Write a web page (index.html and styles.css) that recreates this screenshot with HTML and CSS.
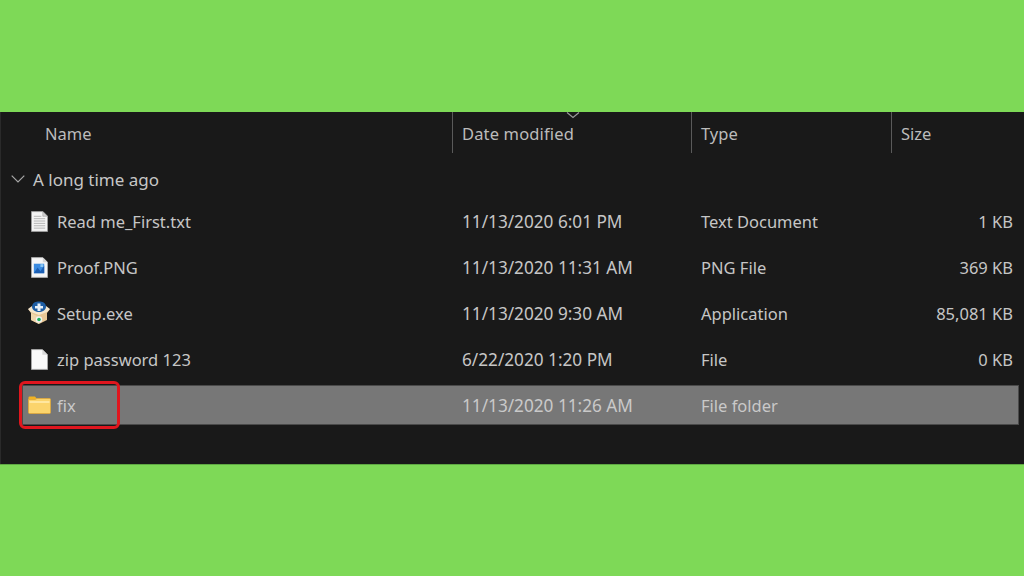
FILE: index.html
```html
<!DOCTYPE html>
<html lang="en">
<head>
<meta charset="utf-8">
<title>File list</title>
<link rel="stylesheet" href="styles.css">
</head>
<body>
<div class="band band-top"></div>
<main class="window">
  <div class="head">
    <div class="col col-name">Name</div>
    <div class="col col-date">Date modified
      <svg class="sort" width="14" height="7" viewBox="0 0 14 7"><path d="M1 0.5 L7 5.5 L13 0.5" fill="none" stroke="#9a9a9a" stroke-width="1.2"/></svg>
    </div>
    <div class="col col-type">Type</div>
    <div class="col col-size">Size</div>
  </div>
  <div class="group">
    <svg class="group-chev" width="14" height="8" viewBox="0 0 14 8"><path d="M0.7 0.7 L7 7 L13.3 0.7" fill="none" stroke="#a8a8a8" stroke-width="1.2"/></svg>
    <span>A long time ago</span>
  </div>
  <div class="rows">
    <div class="row">
      <div class="cell-name">
        <span class="icon">
          <svg width="17" height="21" viewBox="0 0 18 22">
            <path d="M0.5 0.5 H12.5 L17.5 5.5 V21.5 H0.5 Z" fill="#f4f4f4" stroke="#9d9d9d"/>
            <path d="M12.5 0.5 V5.5 H17.5 Z" fill="#cfcfcf" stroke="#9d9d9d" stroke-width="0.6"/>
            <path d="M3 5.5 H11 M3 8 H15 M3 10.5 H15 M3 13 H15 M3 15.5 H15 M3 18 H15" stroke="#b4b4b4" stroke-width="1"/>
          </svg>
        </span>
        <span>Read me_First.txt</span>
      </div>
      <div class="cell-date">11/13/2020 6:01 PM</div>
      <div>Text Document</div>
      <div class="cell-size">1 KB</div>
    </div>
    <div class="row">
      <div class="cell-name">
        <span class="icon">
          <svg width="17" height="21" viewBox="0 0 18 22">
            <path d="M0.5 0.5 H12.5 L17.5 5.5 V21.5 H0.5 Z" fill="#f6f6f6" stroke="#a8a8a8"/>
            <path d="M12.5 0.5 V5.5 H17.5 Z" fill="#d4d4d4"/>
            <rect x="3" y="7" width="11" height="10" fill="#3b8be0"/>
            <path d="M3 17 L7 11 L10 15 L14 9 V17 Z" fill="#1c5fb4"/>
            <rect x="10" y="7.5" width="3" height="3" fill="#8cc8f4"/>
          </svg>
        </span>
        <span>Proof.PNG</span>
      </div>
      <div class="cell-date">11/13/2020 11:31 AM</div>
      <div>PNG File</div>
      <div class="cell-size">369 KB</div>
    </div>
    <div class="row">
      <div class="cell-name">
        <span class="icon icon-wide">
          <svg width="24" height="24" viewBox="0 0 24 24">
            <path d="M1 8 L12 13 L23 8 L20 12 V19 L12 23 L4 19 V12 Z" fill="#e9c795"/>
            <path d="M4 12 L12 16 V23 L4 19 Z" fill="#f0d6ac"/>
            <path d="M1 8 L5 5 L12 10 L19 5 L23 8 L20 11 L12 14 L4 11 Z" fill="#f5e6cc"/>
            <path d="M5 6 C5 1.500 9 0.500 12 0.500 C15 0.500 19 1.500 19 6 C19 9 15 11 12 11 C9 11 5 9 5 6 Z" fill="#1f5ea3"/>
            <path d="M10.500 2.500 H13.500 V5 H16 V7.500 H13.500 V10 H10.500 V7.500 H8 V5 H10.500 Z" fill="#e8f0f8"/>
            <circle cx="12" cy="18.500" r="3.200" fill="#f2f2f2"/>
            <circle cx="12" cy="18.500" r="1.800" fill="#1fae5a"/>
          </svg>
        </span>
        <span>Setup.exe</span>
      </div>
      <div class="cell-date">11/13/2020 9:30 AM</div>
      <div>Application</div>
      <div class="cell-size">85,081 KB</div>
    </div>
    <div class="row">
      <div class="cell-name">
        <span class="icon">
          <svg width="17" height="21" viewBox="0 0 18 22">
            <path d="M0.5 0.5 H12 L17.5 6 V21.5 H0.5 Z" fill="#fafafa" stroke="#a8a8a8"/>
            <path d="M12 0.5 V6 H17.500 Z" fill="#d8d8d8"/>
          </svg>
        </span>
        <span>zip password 123</span>
      </div>
      <div class="cell-date">6/22/2020 1:20 PM</div>
      <div>File</div>
      <div class="cell-size">0 KB</div>
    </div>
    <div class="row row-selected">
      <div class="cell-name">
        <span class="icon icon-wide">
          <svg width="23" height="18" viewBox="0 0 23 18">
            <path d="M0.500 1.500 Q0.500 0.500 1.500 0.500 H7 L9 3 H8 V5 H0.500 Z" fill="#f2b322"/>
            <path d="M0.500 3.500 H7 L9 2.500 H21.500 Q22.500 2.500 22.500 3.500 V16.500 Q22.500 17.500 21.500 17.500 H1.500 Q0.500 17.500 0.500 16.500 Z" fill="#fbd46c" stroke="#e0a83a" stroke-width="0.800"/>
            <path d="M1.500 5 H21.500 V7 H1.500 Z" fill="#ffe7a0"/>
          </svg>
        </span>
        <span>fix</span>
      </div>
      <div class="cell-date">11/13/2020 11:26 AM</div>
      <div>File folder</div>
      <div class="cell-size"></div>
      <div class="callout"></div>
    </div>
  </div>
</main>
<div class="band band-bottom"></div>
</body>
</html>
```

FILE: styles.css
```css
* { box-sizing: border-box; }

html, body {
  margin: 0;
  height: 100%;
}

body {
  display: flex;
  flex-direction: column;
  width: 1024px;
  height: 576px;
  overflow: hidden;
  background: #7ed957;
  font-family: "Noto Sans", "Open Sans", sans-serif;
  font-size: 16.5px;
  color: #c6c6c6;
}

.band-top { height: 112px; }
.band-bottom { flex: 1; border-top: 1px solid #5fa843; }

.window {
  height: 352px;
  background: #191919;
  border-left: 1px solid #2a2a2a;
  display: flex;
  flex-direction: column;
}

.head {
  display: grid;
  grid-template-columns: 451px 239px 200px 1fr;
  height: 41px;
}

.col {
  position: relative;
  display: flex;
  align-items: center;
  padding-left: 9px;
  padding-top: 2px;
  border-left: 1px solid #5a5a5a;
  color: #bcbcbc;
}

.col-name {
  border-left: 0;
  padding-left: 44px;
}

.col-date { letter-spacing: 0.15px; }

.sort {
  position: absolute;
  left: 113px;
  top: 0;
}

.group {
  display: flex;
  align-items: center;
  height: 48px;
  padding-left: 10px;
  padding-top: 4px;
  gap: 8px;
  font-size: 17px;
  color: #c6c6c6;
}

.group-chev { flex: none; }

.rows {
  display: flex;
  flex-direction: column;
  gap: 6px;
  margin-left: 21px;
  margin-right: 5px;
}

.row {
  position: relative;
  display: grid;
  grid-template-columns: 439px 239px 200px 1fr;
  align-items: center;
  height: 40px;
  padding-right: 5px;
  border: 1px solid transparent;
}

.cell-name {
  display: flex;
  align-items: center;
  gap: 9px;
  padding-left: 7px;
}

.cell-date { font-size: 17.2px; }

.icon {
  display: flex;
  justify-content: center;
  align-items: center;
  width: 18px;
  height: 24px;
}

.icon-wide svg { margin: 0 -3px; }

.cell-size { text-align: right; }

.row-selected {
  background: #777777;
  border-color: #4a4a4a;
  color: #c9c9c9;
}

.callout {
  position: absolute;
  left: -4px;
  top: -5px;
  width: 101px;
  height: 48px;
  border: 3px solid #e0161e;
  border-radius: 6px;
}
```
